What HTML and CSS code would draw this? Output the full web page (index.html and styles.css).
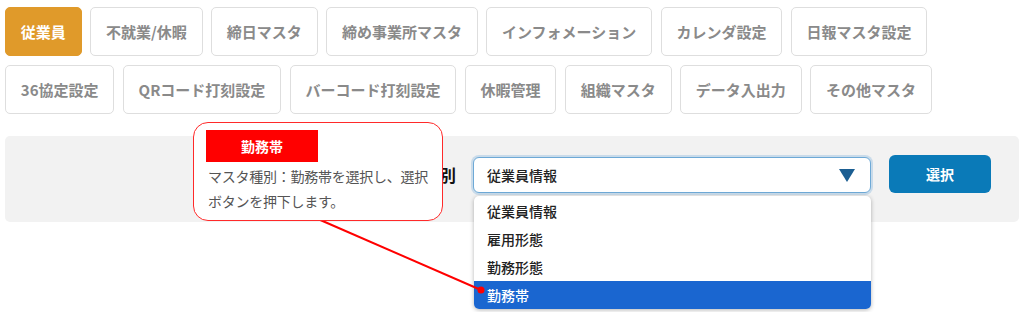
FILE: index.html
```html
<!DOCTYPE html>
<html lang="ja">

<head>
    <meta charset="utf-8">
    <meta name="viewport" content="width=device-width, initial-scale=1.0">
    <title>マスタ設定</title>
    <link rel="stylesheet" href="styles.css">
</head>

<body>
    <div class="page">
        <!-- Onglets des masters -->
        <nav class="tabs">
            <div class="tab-row">
                <a class="tab active">従業員</a>
                <a class="tab">不就業/休暇</a>
                <a class="tab">締日マスタ</a>
                <a class="tab">締め事業所マスタ</a>
                <a class="tab">インフォメーション</a>
                <a class="tab">カレンダ設定</a>
                <a class="tab">日報マスタ設定</a>
            </div>
            <div class="tab-row">
                <a class="tab">36協定設定</a>
                <a class="tab">QRコード打刻設定</a>
                <a class="tab">バーコード打刻設定</a>
                <a class="tab">休暇管理</a>
                <a class="tab">組織マスタ</a>
                <a class="tab">データ入出力</a>
                <a class="tab">その他マスタ</a>
            </div>
        </nav>

        <!-- Choix du type de master -->
        <section class="panel">
            <span class="field-label">マスタ種別</span>
            <div class="select-wrap">
                <div class="select">
                    <span>従業員情報</span>
                    <svg class="arrow" width="16" height="13" viewBox="0 0 16 13">
                        <polygon points="0,0 16,0 8,13" fill="#1b5e92" />
                    </svg>
                </div>
                <ul class="options">
                    <li>従業員情報</li>
                    <li>雇用形態</li>
                    <li>勤務形態</li>
                    <li class="selected">勤務帯</li>
                </ul>
            </div>
            <button class="btn-select" type="button">選択</button>
        </section>

        <!-- Flèche de l'annotation -->
        <svg class="pointer" width="1024" height="312" viewBox="0 0 1024 312">
            <line x1="318" y1="219" x2="481" y2="290" stroke="#ff0000" stroke-width="2" />
            <circle cx="481" cy="290" r="3.5" fill="#ff0000" />
        </svg>

        <!-- Bulle d'annotation -->
        <div class="callout">
            <div class="callout-title">勤務帯</div>
            <p class="callout-text">マスタ種別：勤務帯を選択し、選択ボタンを押下します。</p>
        </div>
    </div>
</body>

</html>
```

FILE: styles.css
```css
/* Style général */
body {
    margin: 0;
    padding: 0;
    background-color: #ffffff;
    font-family: "Noto Sans CJK JP", "Noto Sans", sans-serif;
    color: #222;
}

.page {
    position: relative;
    width: 1024px;
    height: 312px;
    box-sizing: border-box;
    padding: 7px 5px 0;
    overflow: hidden;
}

/* Onglets */
.tabs {
    display: flex;
    flex-direction: column;
    gap: 9px;
}

.tab-row {
    display: flex;
    gap: 8.5px;
}

.tab {
    display: flex;
    align-items: center;
    height: 49px;
    box-sizing: border-box;
    padding: 0 14.8px;
    border: 1px solid #dedede;
    border-radius: 5px;
    background: #fff;
    color: #8a8a8a;
    font-size: 15px;
    font-weight: bold;
    white-space: nowrap;
}

.tab.active {
    background: #e09a2a;
    border-color: #e09a2a;
    color: #fff;
}

/* Panneau de sélection */
.panel {
    display: flex;
    justify-content: flex-end;
    align-items: flex-end;
    gap: 17px;
    margin-top: 22px;
    height: 86px;
    box-sizing: border-box;
    padding: 19px 28px 29px 0;
    background: #f2f2f2;
    border-radius: 5px;
}

.field-label {
    font-size: 17px;
    font-weight: bold;
    color: #111;
    line-height: 36px;
}

.select-wrap {
    position: relative;
    width: 398px;
    margin-right: 1px;
}

.select {
    display: flex;
    align-items: center;
    justify-content: space-between;
    height: 36px;
    box-sizing: border-box;
    padding: 0 15px 0 13px;
    background: #fff;
    border: 1px solid #6ea9d6;
    border-radius: 6px;
    box-shadow: 0 0 0 2px rgba(126, 178, 222, 0.35);
    font-size: 14px;
    font-weight: 500;
}

.arrow {
    margin-top: 1px;
}

/* Liste déroulante */
.options {
    position: absolute;
    top: 39px;
    left: 1px;
    right: 0;
    margin: 0;
    padding: 1px 0 0;
    list-style: none;
    background: #fff;
    border-radius: 5px;
    box-shadow: 0 1px 4px rgba(0, 0, 0, 0.3);
    overflow: hidden;
    z-index: 5;
}

.options li {
    height: 28px;
    line-height: 28px;
    padding-left: 13px;
    font-size: 14px;
    font-weight: 500;
    color: #222;
}

.options li.selected {
    background: #1a66d0;
    color: #fff;
}

.btn-select {
    width: 102px;
    height: 38px;
    border: none;
    border-radius: 6px;
    background: #0a7ab8;
    color: #fff;
    font-family: inherit;
    font-size: 14px;
    font-weight: bold;
}

/* Annotation */
.pointer {
    position: absolute;
    top: 0;
    left: 0;
    z-index: 8;
    pointer-events: none;
}

.callout {
    position: absolute;
    top: 122px;
    left: 193px;
    width: 250px;
    height: 99px;
    box-sizing: border-box;
    padding: 7px 12px 0;
    background: #fff;
    border: 1px solid #ff2a2a;
    border-radius: 15px;
    z-index: 10;
}

.callout-title {
    width: 112px;
    height: 32px;
    line-height: 32px;
    text-align: center;
    background: #ff0000;
    color: #fff;
    font-size: 14px;
    font-weight: bold;
}

.callout-text {
    margin: 2px 0 0 2px;
    font-size: 14px;
    line-height: 25px;
    letter-spacing: -0.25px;
    color: #555;
}
```
